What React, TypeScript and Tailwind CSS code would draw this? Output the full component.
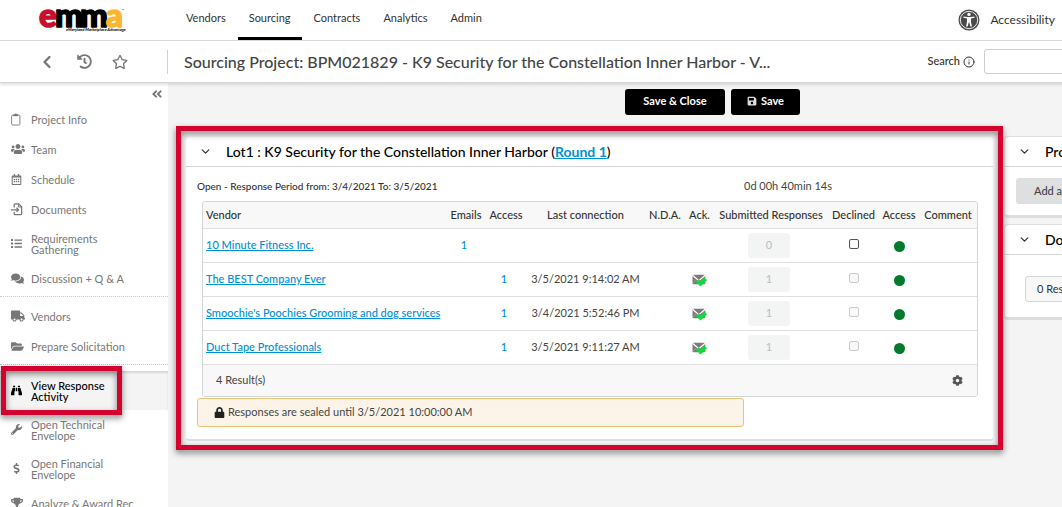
import type { ReactNode } from "react";
import {
  FaAngleDoubleLeft,
  FaBinoculars,
  FaCog,
  FaComments,
  FaDollarSign,
  FaFolderOpen,
  FaHistory,
  FaList,
  FaLock,
  FaRegCalendarAlt,
  FaRegStar,
  FaSave,
  FaTrophy,
  FaTruck,
  FaUsers,
  FaWrench,
} from "react-icons/fa";
import { ChevronDown, ChevronLeft, Info } from "lucide-react";

function Logo() {
  return (
    <svg width="88" height="26" viewBox="0 0 88 26" role="img" aria-label="emma" overflow="visible">
      <text
        y="20"
        fontFamily="Lato, sans-serif"
        fontWeight="900"
        fontSize="33"
        strokeWidth="1.6"
        strokeLinejoin="round"
      >
        <tspan x="1" fill="#c8102e" stroke="#c8102e">e</tspan>
        <tspan x="17" fill="#000" stroke="#000">m</tspan>
        <tspan x="42" fill="#000" stroke="#000">m</tspan>
        <tspan x="68" fill="#fdb62f" stroke="#fdb62f">a</tspan>
      </text>
      <text x="28" y="24" fontFamily="Lato, sans-serif" fontSize="4" fontWeight="900" fontStyle="italic" fill="#111">
        eMaryland Marketplace Advantage
      </text>
      <text x="84" y="4" fontFamily="Lato, sans-serif" fontSize="3" fill="#333">™</text>
    </svg>
  );
}

function AccessibilityIcon() {
  return (
    <svg width="22" height="22" viewBox="0 0 22 22" aria-hidden="true">
      <circle cx="11" cy="11" r="10.5" fill="#4a4a4a" />
      <circle cx="11" cy="11" r="8.7" fill="none" stroke="#fff" strokeWidth="0.9" />
      <circle cx="11" cy="5.4" r="1.7" fill="#fff" />
      <path
        d="M5.6 7.4 9.4 8h3.2l3.8-.6.2 1.3-3.6.9v3l.9 5h-1.5L11.300 13.500h-.6L9.600 17.600H8.100l.9-5v-3l-3.600-.9z"
        fill="#fff"
      />
    </svg>
  );
}

function ClipboardIcon() {
  return (
    <svg width="10" height="13" viewBox="0 0 10 13" fill="none" stroke="currentColor" aria-hidden="true">
      <rect x="0.6" y="2.1" width="8.300" height="9.900" rx="1.200" strokeWidth="0.900" />
      <path d="M2.600 2.900V1.700h1.200a1 1 0 0 1 2 0H7v1.200z" fill="currentColor" strokeWidth="0.500" />
    </svg>
  );
}

function FileImportIcon() {
  return (
    <svg width="12" height="13" viewBox="0 0 12 13" fill="none" stroke="currentColor" strokeWidth="1.300" aria-hidden="true">
      <path d="M3.200 4.500V1.800a.9.9 0 0 1 .9-.9h3.600L10.600 3.700v7a.9.9 0 0 1-.9.9H4.100a.9.9 0 0 1-.9-.9V9" />
      <path d="M7.400 1v3h3" strokeWidth="1" />
      <path d="M0 6.800h7.400M5.500 4.800l2 2-2 2" />
    </svg>
  );
}

function AckIcon() {
  return (
    <svg className="inline-block" width="15" height="13" viewBox="0 0 15 13" role="img" aria-label="Acknowledged">
      <rect x="0.500" y="0.800" width="12.800" height="9.400" rx="1" fill="#7a7a7a" />
      <path d="M.6 1.300 6.800 6.600 13.200 1.300" fill="none" stroke="#fff" strokeWidth="1.200" />
      <path d="M.5 9.800 4.700 5.500" fill="none" stroke="#b5b5b5" strokeWidth="0.700" />
      <path d="M5.300 6.600 8.500 9.800 13.700 4.900" fill="none" stroke="#0fdc3c" strokeWidth="3.800" />
    </svg>
  );
}

const tabs = ["Vendors", "Sourcing", "Contracts", "Analytics", "Admin"];

type Item = { label: string; icon: ReactNode; tall?: boolean; active?: boolean };

const groups: Item[][] = [
  [
    { label: "Project Info", icon: <ClipboardIcon /> },
    { label: "Team", icon: <FaUsers size={14} /> },
    { label: "Schedule", icon: <FaRegCalendarAlt size={11} /> },
    { label: "Documents", icon: <FileImportIcon /> },
    { label: "Requirements Gathering", icon: <FaList size={11} />, tall: true },
    { label: "Discussion + Q & A", icon: <FaComments size={13} /> },
  ],
  [
    { label: "Vendors", icon: <FaTruck size={14} /> },
    { label: "Prepare Solicitation", icon: <FaFolderOpen size={13} /> },
  ],
  [
    { label: "View Response Activity", icon: <FaBinoculars size={11} />, tall: true, active: true },
    { label: "Open Technical Envelope", icon: <FaWrench size={11} />, tall: true },
    { label: "Open Financial Envelope", icon: <FaDollarSign size={11} />, tall: true },
    { label: "Analyze & Award Rec", icon: <FaTrophy size={12} /> },
  ],
];

function NavItem({ item }: { item: Item }) {
  return (
    <li className={item.active ? "relative bg-[#f4f4f4] shadow-[inset_0_2px_2px_rgba(0,0,0,0.12)]" : "relative"}>
      <a
        href="#"
        className={`flex items-center pl-[11px] pr-14 text-[11px] leading-[11px] ${item.tall ? "h-[39px]" : "h-[30px] whitespace-nowrap"} ${item.active ? "font-medium text-black" : "text-[#777]"}`}
      >
        <span className="flex w-5 shrink-0">{item.icon}</span>
        <span>{item.label}</span>
      </a>
      {item.active && (
        <span className="pointer-events-none absolute -top-[5px] left-px h-[49px] w-[121px] border-[5px] border-[#d3022f] drop-shadow-[0_3px_3px_rgba(0,0,0,0.5)]" />
      )}
    </li>
  );
}

type Row = { vendor: string; emails?: string; access?: string; last?: string; ack?: boolean; responses: number };

const rows: Row[] = [
  { vendor: "10 Minute Fitness Inc.", emails: "1", responses: 0 },
  { vendor: "The BEST Company Ever", access: "1", last: "3/5/2021 9:14:02 AM", ack: true, responses: 1 },
  { vendor: "Smoochie's Poochies Grooming and dog services", access: "1", last: "3/4/2021 5:52:46 PM", ack: true, responses: 1 },
  { vendor: "Duct Tape Professionals", access: "1", last: "3/5/2021 9:11:27 AM", ack: true, responses: 1 },
];

function VendorTable() {
  return (
    <div className="overflow-hidden rounded-[3px] border border-[#d3d6d8]">
      <table className="w-full table-fixed border-collapse text-center text-[11px] leading-4 text-[#444]">
        <colgroup>
          <col />
          <col className="w-10" />
          <col className="w-10" />
          <col className="w-[119px]" />
          <col className="w-10" />
          <col className="w-[29px]" />
          <col className="w-[114px]" />
          <col className="w-[51px]" />
          <col className="w-10" />
          <col className="w-[58px]" />
        </colgroup>
        <thead className="bg-[#f8f8f8] text-[#333]">
          <tr className="h-[26px] whitespace-nowrap border-b border-[#dfdfdf]">
            <th className="pl-[3px] text-left font-medium">Vendor</th>
            <th className="font-medium">Emails</th>
            <th className="font-medium">Access</th>
            <th className="font-medium">Last connection</th>
            <th className="font-medium">N.D.A.</th>
            <th className="font-medium">Ack.</th>
            <th className="font-medium">Submitted Responses</th>
            <th className="font-medium">Declined</th>
            <th className="font-medium">Access</th>
            <th className="font-medium">Comment</th>
          </tr>
        </thead>
        <tbody>
          {rows.map((row) => (
            <tr key={row.vendor} className="h-[34px] whitespace-nowrap border-b border-[#dfdfdf]">
              <td className="pl-[3px] text-left">
                <a href="#" className="font-medium text-[#0090d4] underline">{row.vendor}</a>
              </td>
              <td className="pr-1">{row.emails && <a href="#" className="font-medium text-[#0090d4]">{row.emails}</a>}</td>
              <td className="pr-1">{row.access && <a href="#" className="font-medium text-[#0090d4]">{row.access}</a>}</td>
              <td>{row.last}</td>
              <td />
              <td className="align-middle">{row.ack && <AckIcon />}</td>
              <td className="pr-1">
                <button disabled className="h-[25px] w-[42px] rounded-[3px] bg-[#f3f4f4] text-[#bbb]">
                  {row.responses}
                </button>
              </td>
              <td className="pb-1">
                <input
                  type="checkbox"
                  aria-label={`Declined: ${row.vendor}`}
                  disabled={row.responses > 0}
                  className="size-[10px] appearance-none rounded-[2px] border border-[#555] bg-white align-middle disabled:border-[#ccc] disabled:bg-[#f8f8f8]"
                />
              </td>
              <td>
                <span className="inline-block size-[11px] rounded-full bg-[#047a2c] align-middle" />
              </td>
              <td />
            </tr>
          ))}
        </tbody>
      </table>
      <div className="flex h-[31px] items-center justify-between bg-[#f8f8f8] pl-[13px] pr-[14px] text-[11px] text-[#444]">
        <span>4 Result(s)</span>
        <button aria-label="Table settings">
          <FaCog size={11} color="#555" />
        </button>
      </div>
    </div>
  );
}

function CardHeader({ children }: { children: ReactNode }) {
  return (
    <div className="flex h-[30px] items-center gap-[14px] border-b border-[#d6d6d6] pl-[13px]">
      <ChevronDown size={13} strokeWidth={2.4} color="#333" />
      <h2 className="whitespace-nowrap text-[14px] font-medium text-black">{children}</h2>
    </div>
  );
}

export default function App() {
  return (
    <div className="h-screen overflow-hidden bg-[#f4f4f4] font-['Lato',sans-serif] text-[11px] text-[#333]">
      <div className="flex min-h-full min-w-[1257px] flex-col">
        <header className="flex h-[41px] shrink-0 items-center border-b border-[#d9d9d9] bg-white pl-[38px]">
          <Logo />
          <nav className="ml-[49px] flex h-10 gap-px text-[11px]">
            {tabs.map((tab) => (
              <a
                key={tab}
                href="#"
                className={`flex items-center border-b-[3px] px-[11px] ${tab === "Sourcing" ? "border-black" : "border-transparent"}`}
              >
                {tab}
              </a>
            ))}
          </nav>
          <a href="#" className="ml-auto mr-[202px] flex items-center gap-[10px] text-[12px]">
            <AccessibilityIcon />
            Accessibility
          </a>
        </header>

        <div className="relative flex h-[42px] shrink-0 items-center border-b border-[#d6d6d6] bg-white shadow-[0_2px_3px_rgba(0,0,0,0.12)]">
          <div className="flex h-6 w-[168px] items-center border-r border-[#d0d0d0] pl-[37px] text-[#777]">
            <button aria-label="Back" className="w-10"><ChevronLeft size={20} strokeWidth={2.8} /></button>
            <button aria-label="History" className="w-[35px]"><FaHistory size={15} /></button>
            <button aria-label="Favourite"><FaRegStar size={16} /></button>
          </div>
          <h1 className="pl-4 text-[16px] font-medium text-[#444]">
            Sourcing Project: BPM021829 - K9 Security for the Constellation Inner Harbor - V...
          </h1>
          <div className="ml-auto mr-[120px] flex items-center gap-[9px]">
            <label htmlFor="search" className="flex items-center gap-[3px] text-[11px] font-medium">
              Search <Info size={12} />
            </label>
            <input id="search" type="text" className="h-[25px] w-[153px] rounded-[3px] border border-[#ccc] bg-white px-2" />
          </div>
        </div>

        <div className="flex flex-1">
          <aside className="w-[168px] shrink-0 bg-white">
            <div className="flex h-[21px] items-center justify-end pr-[5px] text-[#777]">
              <button aria-label="Collapse menu"><FaAngleDoubleLeft size={12} /></button>
            </div>
            <ul className="border-b border-dotted border-[#ccc] pb-[3px]">{groups[0].map((i) => <NavItem key={i.label} item={i} />)}</ul>
            <ul className="border-b border-dotted border-[#ccc] pb-[3px] pt-1">{groups[1].map((i) => <NavItem key={i.label} item={i} />)}</ul>
            <ul className="pt-[6px]">{groups[2].map((i) => <NavItem key={i.label} item={i} />)}</ul>
          </aside>

          <main className="min-w-0 flex-1 px-[18px] pt-[6px]">
            <div className="flex justify-center gap-[6px] text-[11px] font-bold text-white">
              <button className="h-[26px] w-[100px] rounded-[3px] bg-black pb-[2px]">Save &amp; Close</button>
              <button className="flex h-[26px] w-[69px] items-center justify-center gap-1 rounded-[3px] bg-black pb-[2px]">
                <FaSave size={10} color="#ddd" />
                Save
              </button>
            </div>

            <div className="mt-[22px] grid grid-cols-[minmax(0,807px)_minmax(0,1fr)] items-start gap-3">
              <section className="relative rounded-[3px] border-b-2 border-[#ddd] bg-white">
                <CardHeader>
                  Lot1 : K9 Security for the Constellation Inner Harbor (
                  <a href="#" className="font-bold text-[#0090d4] underline">Round 1</a>)
                </CardHeader>
                <div className="pb-[12px] pl-[11px] pr-[15px] pt-[11px]">
                  <div className="mb-[7px] flex h-4 items-center">
                    <span className="w-[547px] text-[10px] font-medium">
                      Open - Response Period from: 3/4/2021 To: 3/5/2021
                    </span>
                    <span className="text-[11px] text-[#444]">0d 00h 40min 14s</span>
                  </div>
                  <div className="pl-[5px]">
                    <VendorTable />
                  </div>
                  <p className="mt-px flex h-[29px] w-[547px] items-center gap-[3px] rounded-[3px] border border-[#ecc274] bg-[#fdf4e9] pl-4 text-[11px] text-[#444]">
                    <FaLock size={11} color="#222" />
                    Responses are sealed until 3/5/2021 10:00:00 AM
                  </p>
                </div>
                <div className="pointer-events-none absolute -bottom-[11px] -left-[10px] -right-[10px] -top-[11px] border-[5px] border-[#d3022f] drop-shadow-[0_3px_3px_rgba(0,0,0,0.5)]" />
              </section>

              <div className="flex flex-col gap-2">
                <section className="rounded-[3px] border-b-2 border-[#ddd] bg-white ring-1 ring-[#ddd]">
                  <CardHeader>Project Documents</CardHeader>
                  <div className="px-[11px] pb-[11px] pt-[11px]">
                    <button className="h-[26px] rounded-[3px] bg-[#dedfe1] px-[18px] font-medium text-[#444]">Add a document</button>
                  </div>
                </section>
                <section className="rounded-[3px] border-b-2 border-[#ddd] bg-white ring-1 ring-[#ddd]">
                  <CardHeader>Documents</CardHeader>
                  <div className="px-5 pb-[15px] pt-[21px]">
                    <div className="flex h-[26px] items-center rounded-[3px] border border-[#d3d6d8] bg-[#f8f8f8] pl-[11px]">0 Result(s)</div>
                  </div>
                </section>
              </div>
            </div>
          </main>
        </div>
      </div>
    </div>
  );
}
